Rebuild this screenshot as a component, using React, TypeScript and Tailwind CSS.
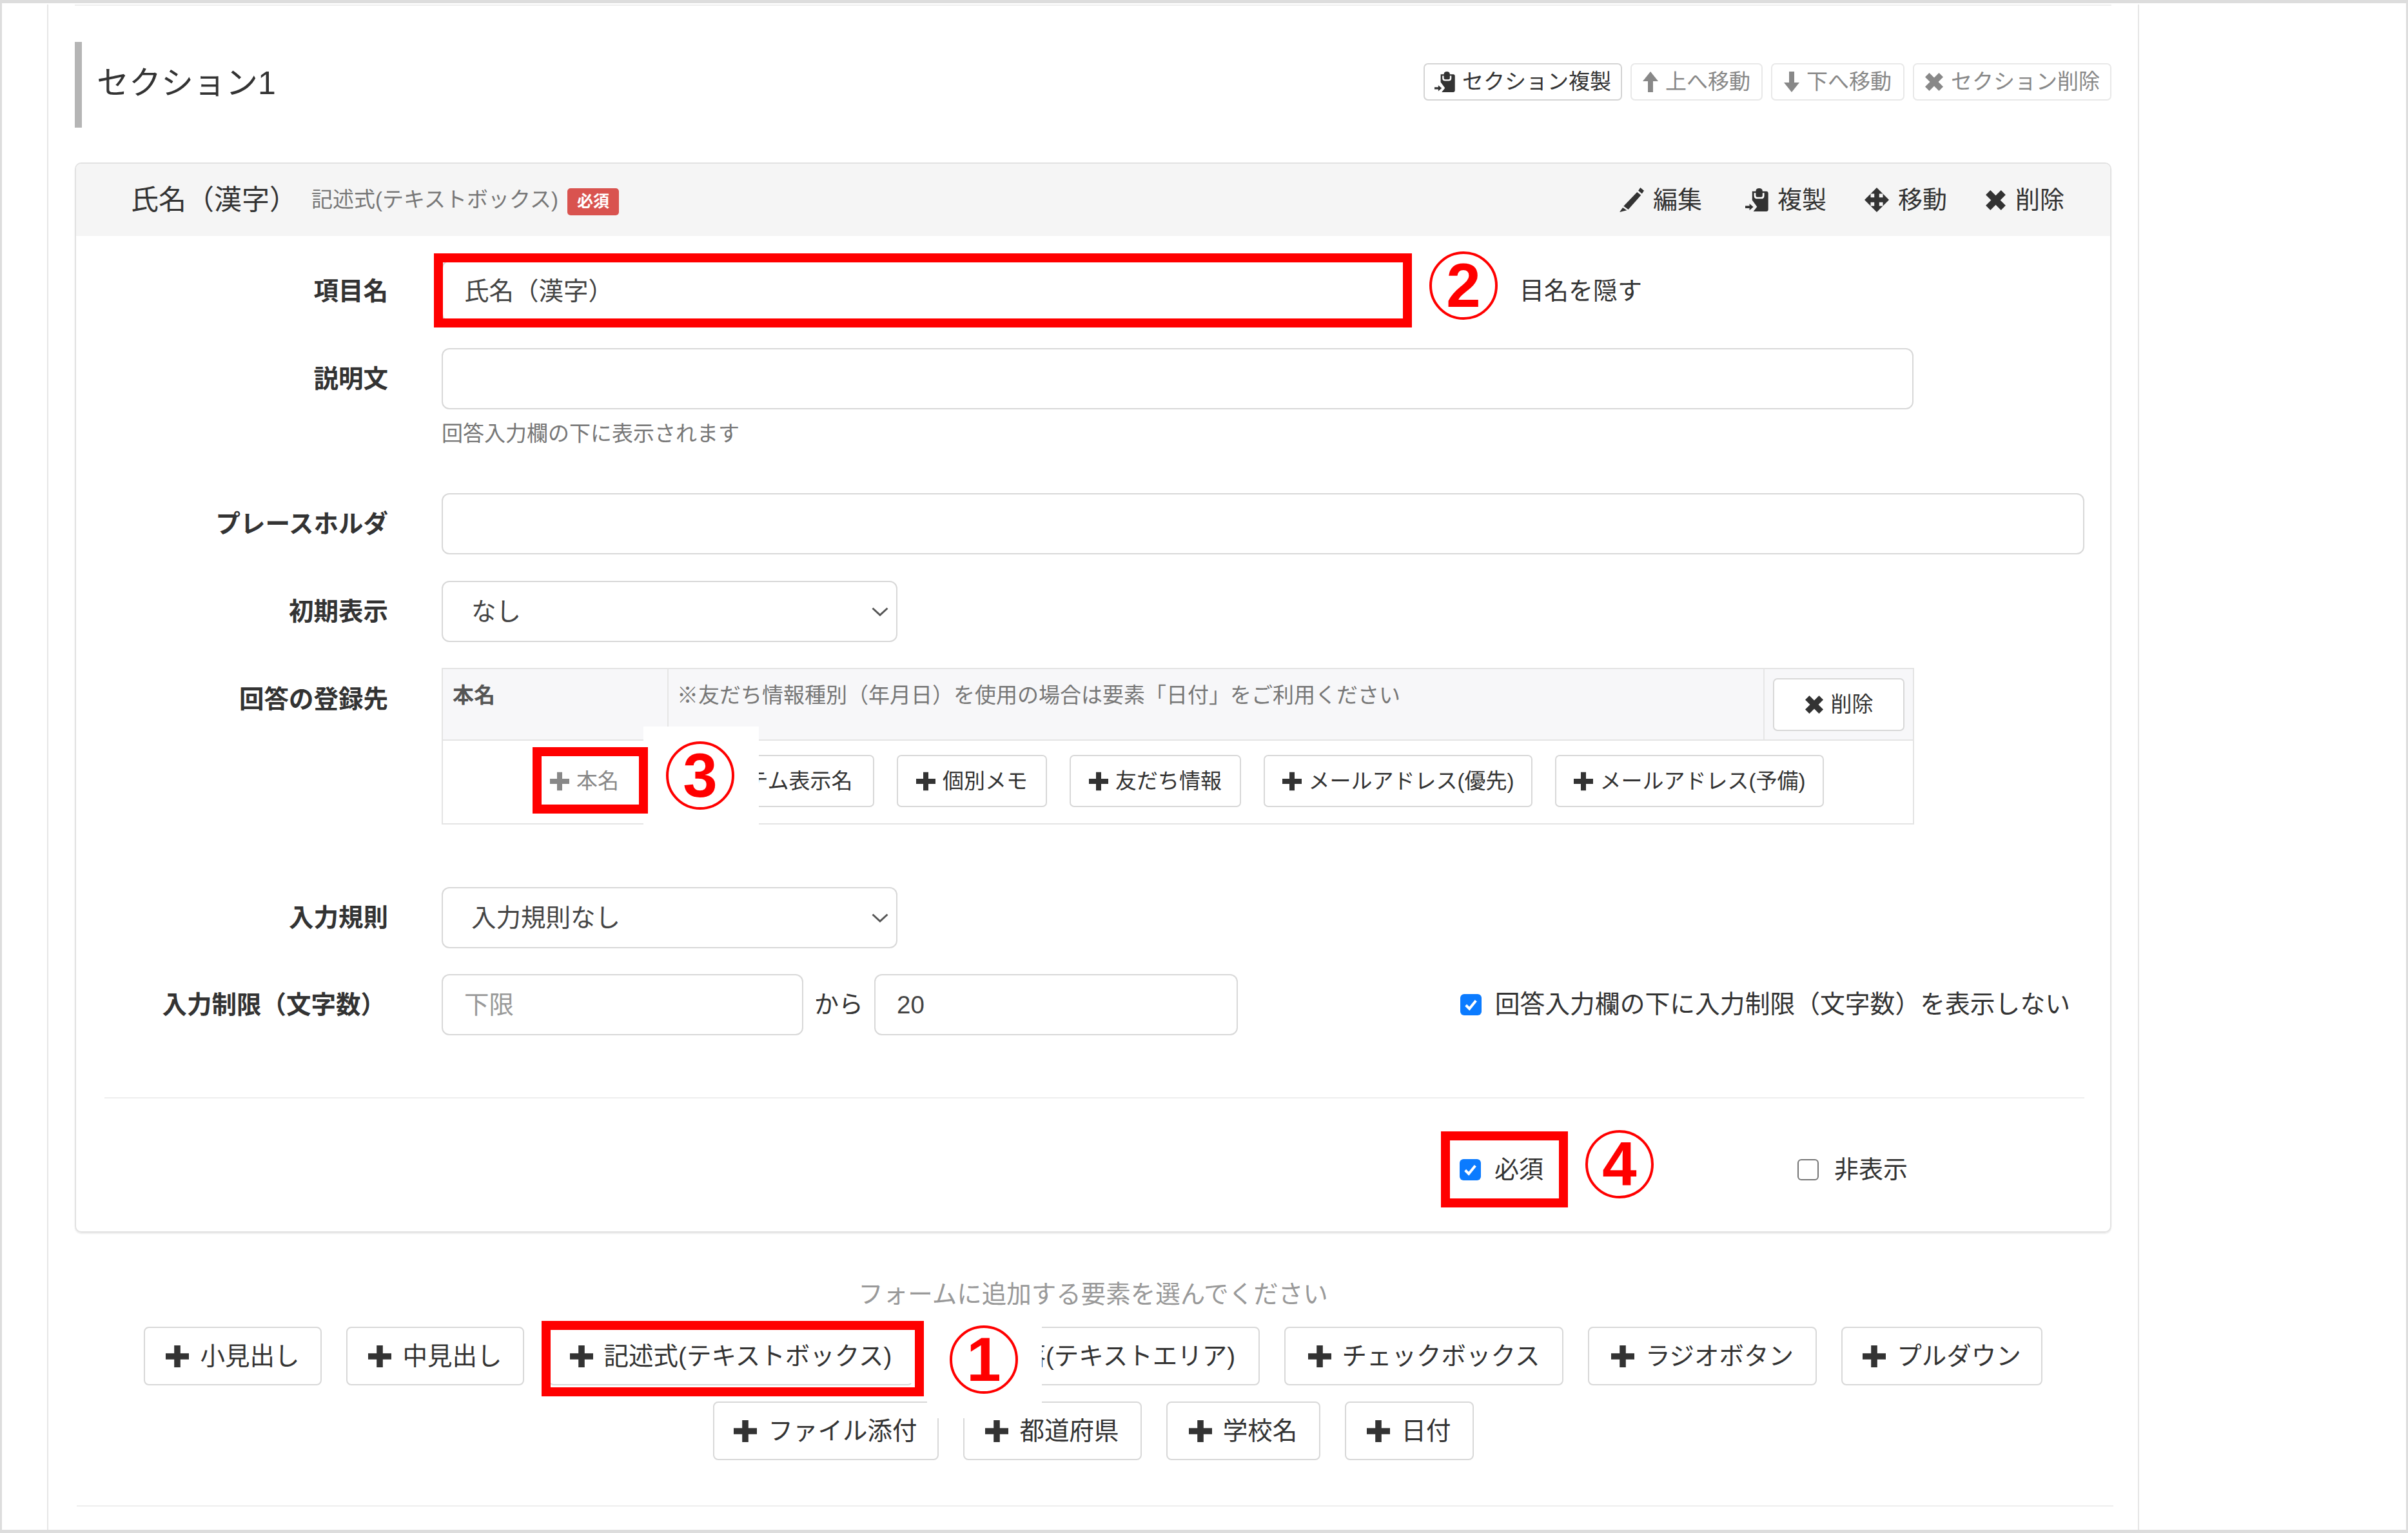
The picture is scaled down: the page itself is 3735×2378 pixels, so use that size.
import React from "react";

const font = { fontFamily: '"Liberation Sans", "Noto Sans CJK JP", sans-serif' };

const PlusIcon = ({ className = "" }: { className?: string }) => (
  <svg viewBox="0 0 12 12" className={className} fill="currentColor">
    <path d="M4.4 0.3h3.2v4.1H12v3.2H7.6v4.1H4.4V7.6H0V4.4h4.4z" />
  </svg>
);

const CrossIcon = ({ className = "" }: { className?: string }) => (
  <svg viewBox="0 0 12 12" className={className} fill="currentColor">
    <path d="M3 .4L6 3.4 9 .4 11.6 3 8.6 6l3 3L9 11.6l-3-3-3 3L.4 9l3-3-3-3z" />
  </svg>
);

const CopyIcon = ({ className = "" }: { className?: string }) => (
  <svg viewBox="0 0 12 12" className={className} fill="currentColor">
    <path d="M3.6 1.6h1.9V1.2C5.5.5 6.2 0 7.2 0s1.7.5 1.7 1.2v.4h2c.6 0 1 .4 1 1V11c0 .6-.4 1-1 1H4.2l1.9-2.4L3.6 6.2z" />
    <path d="M5 2.4v1.4c0 .7.5 1.2 1.2 1.2h2c.7 0 1.2-.5 1.2-1.2V2.4" fill="none" stroke="white" strokeWidth=".9" />
    <path d="M0 9.1h2.2V8l2 1.7-2 1.7v-1.1H0z" />
  </svg>
);

const PencilIcon = ({ className = "" }: { className?: string }) => (
  <svg viewBox="0 0 12 12" className={className} fill="currentColor">
    <path d="M10.2 0l1.8 1.5-1 1.5-1.8-1.5zM8.6 2.2l1.9 1.5-6.2 7-2.3-1.6zM1.6 9.8l2 1.3L0 12z" />
  </svg>
);

const MoveIcon = ({ className = "" }: { className?: string }) => (
  <svg viewBox="0 0 12 12" className={className} fill="currentColor">
    <path d="M6 0l3 3H7.2v1.8H9V3l3 3-3 3V7.2H7.2V9H9l-3 3-3-3h1.8V7.2H3V9L0 6l3-3v1.8h1.8V3H3z" />
  </svg>
);

const ArrowUpIcon = ({ className = "" }: { className?: string }) => (
  <svg viewBox="0 0 12 16" className={className} fill="currentColor">
    <path d="M6 0l6 7.5H8V16H4V7.5H0z" />
  </svg>
);

const ArrowDownIcon = ({ className = "" }: { className?: string }) => (
  <svg viewBox="0 0 12 16" className={className} fill="currentColor">
    <path d="M4 0h4v8.5h4L6 16 0 8.5h4z" />
  </svg>
);

const CaretDown = () => (
  <svg viewBox="0 0 26 14" className="w-[26px] h-[14px] text-[#555]" fill="none" stroke="currentColor" strokeWidth="3">
    <path d="M1.5 1.5L13 12 24.5 1.5" />
  </svg>
);

const Label = ({ text, top = false }: { text: string; top?: boolean }) => (
  <div className={`w-[600px] shrink-0 text-right text-[38.5px] leading-[50px] font-bold text-[#333] ${top ? "self-start pt-[24px]" : ""}`}>
    {text}
  </div>
);

const inputClass =
  "h-[95px] rounded-[12px] border-2 border-[#d8d8d8] bg-white px-[33px] text-[38.5px] text-[#444] flex items-center";

const Select = ({ text }: { text: string }) => (
  <div className={`${inputClass} w-[707px] justify-between !pl-[44px] !pr-[12px]`}>
    <span>{text}</span>
    <CaretDown />
  </div>
);

const SmallBtn = ({ icon, text, muted = false, width }: { icon: React.ReactNode; text: string; muted?: boolean; width: string }) => (
  <div
    className={`${width} h-[58px] rounded-[7px] border-2 flex items-center justify-center gap-[11px] text-[33px] bg-white ${
      muted ? "border-[#e8e8e8] text-[#888]" : "border-[#d4d4d4] text-[#333]"
    }`}
  >
    {icon}
    <span className="whitespace-nowrap">{text}</span>
  </div>
);

const HeadAction = ({ icon, text, width }: { icon: React.ReactNode; text: string; width: string }) => (
  <div className={`${width} flex items-center gap-[14px] text-[38px] text-[#333]`}>
    {icon}
    <span>{text}</span>
  </div>
);

const FieldBtn = ({ text, width, muted = false }: { text: string; width: string; muted?: boolean }) => (
  <div
    className={`${width} h-[81px] shrink-0 rounded-[7px] border-2 border-[#d8d8d8] bg-white flex items-center justify-center gap-[11px] text-[33px] ${
      muted ? "text-[#888]" : "text-[#333]"
    }`}
  >
    <PlusIcon className="w-[30px] h-[30px]" />
    <span className="whitespace-nowrap">{text}</span>
  </div>
);

const AddBtn = ({ text, width }: { text: string; width: string }) => (
  <div className={`${width} h-[91px] rounded-[8px] border-2 border-[#d8d8d8] bg-white flex items-center justify-center gap-[17px] text-[38.5px] text-[#333]`}>
    <PlusIcon className="w-[36px] h-[36px]" />
    <span className="whitespace-nowrap">{text}</span>
  </div>
);

const Check = ({ on = false }: { on?: boolean }) =>
  on ? (
    <span className="w-[33px] h-[33px] rounded-[6px] bg-[#0b7bff] flex items-center justify-center shrink-0">
      <svg viewBox="0 0 16 16" className="w-[25px] h-[25px]" fill="none" stroke="white" strokeWidth="2.6">
        <path d="M3 8.5l3.5 3.5L13 4" />
      </svg>
    </span>
  ) : (
    <span className="w-[33px] h-[33px] rounded-[6px] border-2 border-[#767676] bg-white shrink-0" />
  );

// annotations on top of the screenshot
const Callout = ({ n, className }: { n: string; className: string }) => (
  <div
    className={`absolute w-[106px] h-[106px] rounded-full border-[4px] border-[#f00] bg-white text-[#f00] font-bold text-[96px] leading-none flex items-center justify-center ${className}`}
  >
    {n}
  </div>
);

const RedBox = ({ className }: { className: string }) => (
  <div className={`absolute border-[14px] border-[#f00] ${className}`} />
);

export default function App() {
  return (
    <div style={font} className="relative w-[3735px] h-[2378px] overflow-hidden bg-white border-t-[5px] border-b-[5px] border-x-[3px] border-[#ddd] text-[#333]">
      <div className="h-full ml-[70px] w-[3245px] border-x-2 border-[#e6e6e6] pl-[41px] pr-[41px]">
        <div className="h-[2px] bg-[#eee] mt-[2px]" />

        {/* section title */}
        <div className="flex items-start justify-between pt-[56px] h-[243px]">
          <div className="flex items-center h-[133px] border-l-[11px] border-[#b5b5b5] pl-[23px] text-[50px]">
            <span className="-mt-[5px]">セクション1</span>
          </div>
          <div className="flex gap-[13px] mt-[33px]">
            <SmallBtn width="w-[308px]" icon={<CopyIcon className="w-[32px] h-[32px]" />} text="セクション複製" />
            <SmallBtn width="w-[205px]" muted icon={<ArrowUpIcon className="w-[24px] h-[32px]" />} text="上へ移動" />
            <SmallBtn width="w-[207px]" muted icon={<ArrowDownIcon className="w-[24px] h-[32px]" />} text="下へ移動" />
            <SmallBtn width="w-[308px]" muted icon={<CrossIcon className="w-[30px] h-[30px]" />} text="セクション削除" />
          </div>
        </div>

        {/* element card */}
        <div className="h-[1660px] rounded-[10px] border-2 border-[#e2e2e2] shadow-[0_2px_2px_rgba(0,0,0,0.08)]">
          <div className="h-[112px] bg-[#f5f5f5] rounded-t-[8px] flex items-center pl-[85px] pr-[64px]">
            <span className="text-[43px] mr-[22px]">氏名（漢字）</span>
            <span className="text-[33px] text-[#777] mr-[14px]">記述式(テキストボックス)</span>
            <span className="w-[80px] h-[42px] mt-[5px] rounded-[5px] bg-[#d9534f] text-white text-[25px] font-bold flex items-center justify-center">必須</span>
            <div className="ml-auto flex">
              <HeadAction width="w-[195px]" icon={<PencilIcon className="w-[38px] h-[38px]" />} text="編集" />
              <HeadAction width="w-[185px]" icon={<CopyIcon className="w-[36px] h-[36px]" />} text="複製" />
              <HeadAction width="w-[187px]" icon={<MoveIcon className="w-[38px] h-[38px]" />} text="移動" />
              <HeadAction width="w-[130px]" icon={<CrossIcon className="w-[33px] h-[33px]" />} text="削除" />
            </div>
          </div>

          <div className="pr-[40px] -ml-[116px]">
            <div className="flex items-center pt-[38px] gap-[83px]">
              <Label text="項目名" />
              <div className={`${inputClass} w-[1505px]`}>氏名（漢字）</div>
              <span className="text-[38px] ml-[84px]">目名を隠す</span>
            </div>

            <div className="flex items-center mt-[41px] gap-[83px]">
              <Label text="説明文" />
              <div className={`${inputClass} w-[2283px]`} />
            </div>
            <div className="ml-[683px] mt-[13px] text-[33px] leading-[50px] text-[#777]">回答入力欄の下に表示されます</div>

            <div className="flex items-center mt-[67px] gap-[83px]">
              <Label text="プレースホルダ" />
              <div className={`${inputClass} flex-1`} />
            </div>

            <div className="flex items-center mt-[41px] gap-[83px]">
              <Label text="初期表示" />
              <Select text="なし" />
            </div>

            <div className="flex mt-[40px] gap-[83px]">
              <Label text="回答の登録先" top />
              <div className="w-[2284px] h-[243px] border-2 border-[#e4e4e4] shrink-0">
                <div className="h-[111px] bg-[#f7f7f9] border-b-2 border-[#e4e4e4] flex text-[33px]">
                  <div className="w-[350px] border-r-2 border-[#e6e6e6] pl-[15px] pt-[19px] font-bold text-[#555] leading-[44px]">本名</div>
                  <div className="w-[1700px] border-r-2 border-[#e6e6e6] pl-[13px] pt-[19px] text-[#777] leading-[44px]">
                    ※友だち情報種別（年月日）を使用の場合は要素「日付」をご利用ください
                  </div>
                  <div className="flex-1 flex items-center justify-center">
                    <div className="w-[204px] h-[82px] rounded-[7px] border-2 border-[#d8d8d8] bg-white flex items-center justify-center gap-[11px]">
                      <CrossIcon className="w-[30px] h-[30px]" />
                      <span>削除</span>
                    </div>
                  </div>
                </div>
                <div className="flex pl-[143px] pt-[22px] gap-[35px]">
                  <FieldBtn width="w-[165px] pr-[12px] -mr-[12px]" text="本名" muted />
                  <FieldBtn width="w-[338px]" text="システム表示名" />
                  <FieldBtn width="w-[233px]" text="個別メモ" />
                  <FieldBtn width="w-[266px]" text="友だち情報" />
                  <FieldBtn width="w-[417px]" text="メールアドレス(優先)" />
                  <FieldBtn width="w-[417px]" text="メールアドレス(予備)" />
                </div>
              </div>
            </div>

            <div className="flex items-center mt-[97px] gap-[83px]">
              <Label text="入力規則" />
              <Select text="入力規則なし" />
            </div>

            <div className="flex items-center mt-[40px]">
              <div className="w-[596px] shrink-0 text-right text-[38.5px] leading-[50px] font-bold">入力制限（文字数）</div>
              <div className={`${inputClass} w-[561px] ml-[87px] !text-[#999]`}>下限</div>
              <span className="text-[38px] mx-[17px]">から</span>
              <div className={`${inputClass} w-[564px]`}>20</div>
              <div className="ml-auto flex items-center gap-[21px] text-[38.8px] mr-[22px]">
                <Check on />
                <span>回答入力欄の下に入力制限（文字数）を表示しない</span>
              </div>
            </div>

            <div className="ml-[160px] mt-[96px] h-[2px] bg-[#eee]" />

            <div className="flex items-center mt-[82px] text-[38px]">
              <div className="ml-[2262px] flex items-center gap-[21px]">
                <Check on />
                <span>必須</span>
              </div>
              <div className="ml-[394px] flex items-center gap-[24px]">
                <Check />
                <span>非表示</span>
              </div>
            </div>
          </div>
        </div>

        {/* add element buttons */}
        <div className="mt-[71px] text-center text-[38.5px] leading-[50px] text-[#999]">フォームに追加する要素を選んでください</div>
        <div className="mt-[25px] flex flex-wrap justify-center gap-x-[38px] gap-y-[25px]">
          <AddBtn width="w-[276px]" text="小見出し" />
          <AddBtn width="w-[276px]" text="中見出し" />
          <AddBtn width="w-[565px] !border-t-transparent !border-x-transparent" text="記述式(テキストボックス)" />
          <AddBtn width="w-[500px]" text="段落(テキストエリア)" />
          <AddBtn width="w-[433px]" text="チェックボックス" />
          <AddBtn width="w-[355px]" text="ラジオボタン" />
          <AddBtn width="w-[312px]" text="プルダウン" />
          <AddBtn width="w-[350px]" text="ファイル添付" />
          <AddBtn width="w-[277px]" text="都道府県" />
          <AddBtn width="w-[239px]" text="学校名" />
          <AddBtn width="w-[200px]" text="日付" />
        </div>
        <div className="absolute left-[116px] top-[2330px] w-[3159px] h-[2px] bg-[#eee]" />
      </div>

      {/* annotations */}
      <div className="absolute left-[995px] top-[1122px] w-[179px] h-[155px] bg-white" />
      <div className="absolute left-[1435px] top-[2035px] w-[178px] h-[160px] bg-white" />
      <RedBox className="left-[670px] top-[388px] w-[1517px] h-[115px]" />
      <Callout n="2" className="left-[2214px] top-[385px]" />
      <RedBox className="left-[823px] top-[1154px] w-[179px] h-[103px]" />
      <Callout n="3" className="left-[1030px] top-[1145px]" />
      <RedBox className="left-[2232px] top-[1750px] w-[197px] h-[118px]" />
      <Callout n="4" className="left-[2456px] top-[1748px]" />
      <RedBox className="left-[837px] top-[2044px] w-[593px] h-[117px]" />
      <Callout n="1" className="left-[1470px] top-[2051px]" />
    </div>
  );
}
